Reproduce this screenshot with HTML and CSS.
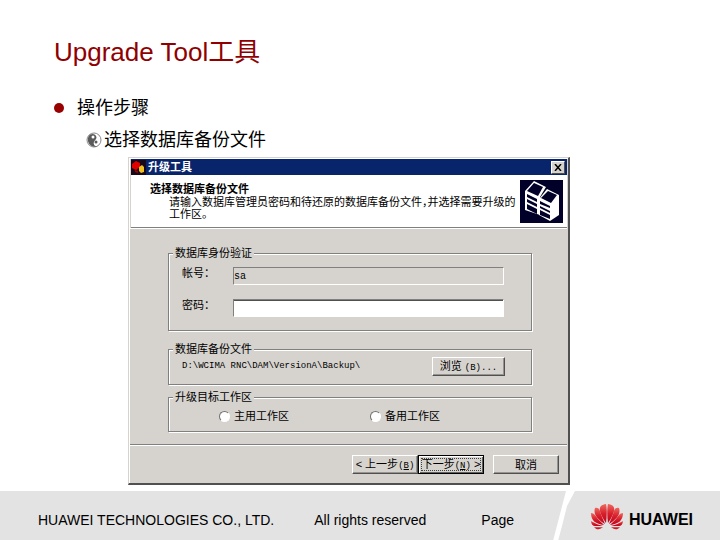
FILE: index.html
```html
<!DOCTYPE html>
<html lang="zh-CN">
<head>
	<meta charset="utf-8">
	<title>Upgrade Tool工具</title>
	<link rel="stylesheet" href="styles.css">
</head>
<body>

	<main>
		<h1>Upgrade Tool工具</h1>

		<ul class="steps">
			<li><span class="dot"></span>操作步骤</li>
			<li class="sub">
				<svg class="yinyang" viewBox="0 0 16 16" aria-hidden="true">
					<circle cx="8" cy="8" r="7" fill="#fff" stroke="#888"/>
					<path d="M5 2a7 7 0 0 0 6 12.500c-3 0-4-1-4-3 0-3 4-3 4-6S8 1 5 2z" fill="#5a5a5a" transform="rotate(-12 8 8)"/>
					<circle cx="7" cy="5" r="1.500" fill="#fff"/>
					<circle cx="10" cy="10" r="1.500" fill="#5a5a5a"/>
				</svg>
				选择数据库备份文件
			</li>
		</ul>

		<form class="dialog">
			<div class="titlebar">
				<svg class="app-icon" viewBox="0 0 15 15" aria-hidden="true">
					<rect width="15" height="15" fill="#180818"/>
					<path d="M1 4l4-3 4 2v4l-4 3-4-2z" fill="#e00000"/>
					<path d="M8 7l3-2 2 2v5l-3 1-2-2z" fill="#f0c020"/>
					<path d="M4 10l3 1v2l-3-1z" fill="#a00000"/>
				</svg>
				<span class="caption">升级工具</span>
				<button type="button" class="close" aria-label="关闭">
					<svg viewBox="0 0 8 7" aria-hidden="true"><path d="M1 0l6 7M7 0l-6 7" stroke="#000" stroke-width="1.5"/></svg>
				</button>
			</div>

			<div class="head">
				<div class="intro">
					<h2>选择数据库备份文件</h2>
					<p>请输入数据库管理员密码和待还原的数据库备份文件，并选择需要升级的<br>工作区。</p>
				</div>
				<svg class="servers" viewBox="0 0 43 43" aria-hidden="true">
					<rect width="43" height="43" fill="#000028"/>
					<path d="M5 11L14 1l12 6-6 10v18L5 30z" fill="#fff"/>
					<path d="M7 11l7-8 9 4-5 9z" fill="#000028"/>
					<path d="M7 14l10 5v3L7 17zM7 19l10 5v3L7 22zM7 24l10 5v5L7 29z" fill="#000028"/>
					<path d="M19 19l8-10 12 6v20l-9 6-11-6z" fill="#fff"/>
					<path d="M21 18l7-7 9 4-6 8z" fill="#000028"/>
					<path d="M20 21l10 5v2l-10-4zM20 26l10 5v2l-10-5zM20 30l10 5v4l-10-4z" fill="#000028"/>
				</svg>
			</div>

			<div class="content">
				<fieldset class="login">
					<legend>数据库身份验证</legend>
					<label for="user">帐号：</label>
					<input type="text" id="user" value="sa" disabled>
					<label for="pass">密码：</label>
					<input type="password" id="pass">
				</fieldset>

				<fieldset class="backup">
					<legend>数据库备份文件</legend>
					<span class="path">D:\WCIMA RNC\DAM\VersionA\Backup\</span>
					<button type="button" class="btn">浏览<span class="key">(B)...</span></button>
				</fieldset>

				<fieldset class="target">
					<legend>升级目标工作区</legend>
					<label><input type="radio" name="area">主用工作区</label>
					<label><input type="radio" name="area">备用工作区</label>
				</fieldset>
			</div>

			<div class="actions">
				<button type="button" class="btn">&lt; 上一步<span class="key">(<u>B</u>)</span></button>
				<button type="button" class="btn default">下一步<span class="key">(<u>N</u>)</span> &gt;</button>
				<button type="button" class="btn cancel">取消</button>
			</div>
		</form>
	</main>

	<footer>
		<div class="info">
			<span>HUAWEI TECHNOLOGIES CO., LTD.</span>
			<span>All rights reserved</span>
			<span class="page">Page</span>
		</div>
		<div class="brand">
			<svg class="flower" viewBox="0 0 32 26" aria-hidden="true">
				<defs>
					<linearGradient id="red" x1="0" y1="0" x2="0" y2="1">
						<stop offset="0" stop-color="#ee6a60"/>
						<stop offset="0.5" stop-color="#d8202c"/>
						<stop offset="1" stop-color="#c00018"/>
					</linearGradient>
				</defs>
				<g id="petals" fill="url(#red)">
					<path d="M15 19C10 12 7 5 10 2c1-1 3-2 5-2 1 4 1 12 0 19z"/>
					<path d="M14 20C6 15 2 10 4 4c2-1 4 0 5 3 1 4 3 8 5 13z"/>
					<path d="M13 21C5 20 0 17 0 9c3 0 5 3 7 6z"/>
					<path d="M12 22H4c-2 0-4-2-4-5 4 2 7 4 12 5z"/>
					<path d="M12 23c-2 2-6 4-9 0z"/>
				</g>
				<use href="#petals" transform="matrix(-1 0 0 1 32 0)"/>
			</svg>
			<span>HUAWEI</span>
		</div>
	</footer>

</body>
</html>
```
FILE: styles.css
```css
* {
	box-sizing: border-box;
}
body {
	margin: 0;
	min-height: 100vh;
	display: flex;
	flex-direction: column;
	background-color: #fff;
	color: #000;
	font-family: "Liberation Sans", "Noto Sans CJK SC", sans-serif;
}
main {
	flex: 1;
	padding: 32px 54px 6px;
}
h1 {
	margin: 0;
	font-size: 26px;
	line-height: 40px;
	font-weight: normal;
	color: #900000;
}

/* bullets */
.steps {
	margin: 20px 0 0;
	padding: 0;
	list-style: none;
	font-size: 18px;
	line-height: 32px;
}
.steps li {
	display: flex;
	align-items: center;
}
.steps .sub {
	padding-left: 32px;
}
.dot {
	width: 10px;
	height: 10px;
	margin-right: 13px;
	border-radius: 50%;
	background-color: #990000;
}
.yinyang {
	width: 16px;
	height: 16px;
	margin-right: 2px;
}

/* dialog */
.dialog {
	max-width: 442px;
	margin: 1px 0 0 74px;
	padding: 1px;
	border: 1px solid #d6d3ce;
	border-right: 2px solid #505050;
	border-bottom: 2px solid #505050;
	box-shadow: inset 1px 1px 0 #fff;
	background-color: #d6d3ce;
	font-size: 11px;
	line-height: 12px;
}
.titlebar {
	display: flex;
	align-items: center;
	height: 16px;
	margin-left: 1px;
	padding-right: 2px;
	background-color: #08246b;
	color: #fff;
}
.app-icon {
	width: 15px;
	height: 15px;
	margin-right: 2px;
}
.caption {
	flex: 1;
	font-weight: bold;
}
.close {
	display: flex;
	align-items: center;
	justify-content: center;
	width: 14px;
	height: 13px;
	padding: 0;
	border: 1px solid;
	border-color: #fff #505050 #505050 #fff;
	background-color: #d6d3ce;
}
.close svg {
	width: 8px;
	height: 7px;
}
.head {
	display: flex;
	justify-content: space-between;
	margin-left: 1px;
	padding: 5px 4px 4px 19px;
	border-bottom: 1px solid #808080;
	background-color: #fff;
}
.intro {
	padding-top: 3px;
	white-space: nowrap;
}
.intro h2 {
	margin: 0;
	font-size: 11px;
	line-height: 13px;
}
.intro p {
	margin: 0 0 0 19px;
	font-feature-settings: "halt";
}
.servers {
	flex: none;
	width: 43px;
	height: 43px;
}
.content {
	display: flex;
	flex-direction: column;
	padding: 18px 35px 12px 38px;
	border-top: 1px solid #fff;
	border-bottom: 1px solid #808080;
}
fieldset {
	min-width: 0;
	margin: 0;
	border: 1px solid #808080;
	box-shadow: 1px 1px 0 #fff, inset 1px 1px 0 #fff;
}
legend {
	margin-left: -9px;
	padding: 0 2px;
	background-color: #d6d3ce;
}
.login {
	display: grid;
	grid-template-columns: 51px 1fr;
	row-gap: 14px;
	height: 84px;
	padding: 8px 27px 12px 13px;
}
.login input {
	width: 100%;
	height: 18px;
	padding: 0;
	border: 1px solid;
	border-color: #808080 #fff #fff #808080;
	background-color: #fff;
	font: 10px "Liberation Mono", monospace;
	color: #000;
}
.login input:disabled {
	background-color: #d6d3ce;
}
#pass {
	box-shadow: inset 0 1px 0 #505050;
}
.backup {
	display: flex;
	justify-content: space-between;
	height: 42px;
	margin-top: 12px;
	padding: 2px 26px 0 13px;
}
.path {
	padding-top: 3px;
	font-family: "Liberation Mono", monospace;
	font-size: 9px;
	white-space: pre;
}
.target {
	display: flex;
	height: 41px;
	margin-top: 6px;
	padding: 7px 0 0 13px;
}
.target label {
	display: flex;
	align-items: center;
	flex: 0 0 151px;
	height: 12px;
}
.target legend + label {
	margin-left: 37px;
}
.target input {
	appearance: none;
	width: 11px;
	height: 11px;
	margin: 0 4px 0 0;
	border: 1px solid;
	border-color: #707070 #fff #fff #707070;
	border-radius: 50%;
	background-color: #fff;
}

/* buttons */
.btn {
	flex: none;
	width: 73px;
	height: 19px;
	padding: 0;
	border: 1px solid;
	border-color: #fff #505050 #505050 #fff;
	box-shadow: inset -1px -1px 0 #969490;
	background-color: #d6d3ce;
	color: #000;
	font-family: inherit;
	font-size: 11px;
	line-height: 12px;
	white-space: nowrap;
}
.key {
	margin-left: 3px;
	font-family: "Liberation Mono", monospace;
	font-size: 9px;
}
.actions {
	display: flex;
	justify-content: flex-end;
	padding: 9px 8px 8px;
	border-top: 1px solid #fff;
}
.actions .btn {
	width: 66px;
}
.actions .key {
	margin-left: 0;
}
.actions .default {
	border-color: #000;
	outline: 1px dotted #404040;
	outline-offset: -4px;
	box-shadow: inset 1px 1px 0 #fff, inset -1px -1px 0 #606060;
}
.actions .cancel {
	margin-left: 9px;
}

/* footer */
footer {
	display: flex;
	height: 50px;
	font-size: 14px;
	line-height: 20px;
}
.info {
	flex: 1;
	display: flex;
	gap: 40px;
	align-items: center;
	padding: 8px 52px 0 38px;
	background-color: #e3e3e3;
	clip-path: polygon(0 0, 100% 0, calc(100% - 13px) 100%, 0 100%);
}
.page {
	margin-left: auto;
}
.brand {
	flex: 0 0 162px;
	display: flex;
	align-items: center;
	gap: 6px;
	margin-left: -8px;
	padding: 2px 0 0 33px;
	background-color: #e3e3e3;
	font-size: 16px;
	font-weight: bold;
	clip-path: polygon(17px 0, 100% 0, 100% 100%, 0 100%, 4px 70%, 9px 30%);
}
.brand span {
	padding-top: 5px;
}
.flower {
	width: 32px;
	height: 26px;
}
```
